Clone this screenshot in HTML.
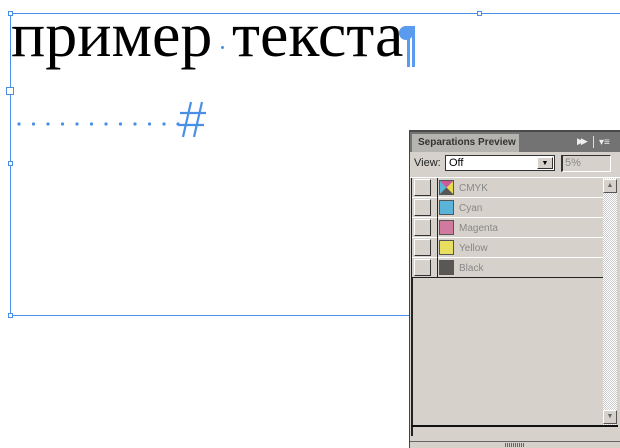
<!DOCTYPE html>
<html><head><style>
body{margin:0;width:620px;height:448px;background:#fff;position:relative;overflow:hidden;font-family:"Liberation Sans",sans-serif}
.a{position:absolute}
.h{position:absolute;width:5px;height:5px;border:1px solid #4a8fe7;background:#fff;box-sizing:border-box}
.row{position:absolute;left:412px;width:191px;height:19px;background:#d6d2cb;border-bottom:1px solid #fff}
.cb{position:absolute;left:2px;top:1px;width:17px;height:17px;border:1px solid #fff;border-right-color:#333;border-bottom-color:#333;box-sizing:border-box}
.sw{position:absolute;left:27px;top:2px;width:15px;height:15px;border:1px solid #555;box-sizing:border-box}
.lb{position:absolute;left:47px;top:5px;font-size:10px;color:#888}
.t{position:absolute;top:3px;font-family:'Liberation Serif',serif;font-size:64px;line-height:64px;color:#000;white-space:nowrap}
</style></head><body>
<div class="a" style="left:10px;top:13px;width:610px;height:1px;background:#4a8fe7"></div>
<div class="a" style="left:10px;top:13px;width:1px;height:302px;background:#4a8fe7"></div>
<div class="a" style="left:10px;top:315px;width:400px;height:1px;background:#4a8fe7"></div>
<div class="h" style="left:8px;top:11px"></div>
<div class="h" style="left:477px;top:11px"></div>
<div class="h" style="left:6px;top:87px;width:8px;height:8px"></div>
<div class="h" style="left:8px;top:161px"></div>
<div class="h" style="left:8px;top:313px"></div>
<div class="t" style="left:11px">пример</div>
<div class="t" style="left:232px">текста</div>
<div class="a" style="left:221px;top:46px;width:3px;height:3px;border-radius:50%;background:#4a8fe7"></div>
<svg class="a" style="left:398px;top:24px" width="22" height="44"><circle cx="8" cy="9" r="7" fill="#5a9bf0"/><rect x="9" y="2" width="3" height="41" fill="#5a9bf0"/><rect x="14" y="2" width="3" height="41" fill="#5a9bf0"/><rect x="8" y="2" width="9" height="3" fill="#5a9bf0"/></svg>
<svg class="a" style="left:14px;top:100px" width="200" height="40">
<g fill="#4a8fe7"><circle cx="5" cy="24" r="1.6"/><circle cx="19.5" cy="24" r="1.6"/><circle cx="34" cy="24" r="1.6"/><circle cx="48.5" cy="24" r="1.6"/><circle cx="63" cy="24" r="1.6"/><circle cx="77.5" cy="24" r="1.6"/><circle cx="92" cy="24" r="1.6"/><circle cx="106.5" cy="24" r="1.6"/><circle cx="121" cy="24" r="1.6"/><circle cx="135.5" cy="24" r="1.6"/><circle cx="150" cy="24" r="1.6"/><circle cx="164" cy="24" r="1.6"/></g>
<g stroke="#4a8fe7" stroke-width="2.2"><line x1="177" y1="2" x2="169" y2="37"/><line x1="188" y1="2" x2="180" y2="37"/><line x1="166" y1="13" x2="192" y2="13"/><line x1="164" y1="25" x2="190" y2="25"/></g></svg>
<!-- panel -->
<div class="a" style="left:409px;top:130px;width:211px;height:318px;background:#d6d2cb;border-left:1px solid #444;border-top:2px solid #4a4a4a;box-sizing:border-box"></div>
<div class="a" style="left:410px;top:132px;width:210px;height:20px;background:#737373"></div>
<div class="a" style="left:412px;top:134px;width:107px;height:18px;background:#b6b4b1;font-size:10px;font-weight:bold;color:#333;line-height:18px;text-indent:6px">Separations Preview</div>
<div class="a" style="left:577px;top:136px;font-size:9px;color:#eee;letter-spacing:-3px">▶▶</div>
<div class="a" style="left:593px;top:136px;width:1px;height:12px;background:#ddd"></div>
<div class="a" style="left:599px;top:138px;font-size:10px;color:#eee;line-height:10px">▾≡</div>
<div class="a" style="left:414px;top:157px;font-size:11px;color:#222">View:</div>
<div class="a" style="left:445px;top:155px;width:110px;height:16px;background:#fff;border:1px solid #333;box-sizing:border-box;font-size:11px;line-height:14px;text-indent:3px">Off</div>
<div class="a" style="left:537px;top:157px;width:16px;height:12px;background:#d6d2cb;border:1px solid #fff;border-right-color:#333;border-bottom-color:#333;box-sizing:border-box;font-size:7px;text-align:center;line-height:11px">▼</div>
<div class="a" style="left:561px;top:155px;width:50px;height:17px;border:1px solid #fff;border-top-color:#333;border-left:2px solid #333;box-sizing:border-box;font-size:11px;color:#888;line-height:14px;text-indent:2px">5%</div>
<div class="a" style="left:410px;top:177px;width:210px;height:1px;background:#fff"></div>
<div class="a" style="left:411px;top:178px;width:2px;height:258px;background:#222"></div>
<div class="row" style="top:178px"><div class="cb"></div><div class="sw" style="background:linear-gradient(135deg,#5ab4d8 50%,#e8d84a 50%)"><svg width="13" height="13" style="position:absolute"><polygon points="0,0 13,0 6.5,6.5" fill="#d0589a"/><polygon points="0,13 13,13 6.5,6.5" fill="#555"/></svg></div><div class="lb">CMYK</div></div>
<div class="row" style="top:198px"><div class="cb"></div><div class="sw" style="background:#5ab4d8"></div><div class="lb">Cyan</div></div>
<div class="row" style="top:218px"><div class="cb"></div><div class="sw" style="background:#d07aa0"></div><div class="lb">Magenta</div></div>
<div class="row" style="top:238px"><div class="cb"></div><div class="sw" style="background:#e8de60"></div><div class="lb">Yellow</div></div>
<div class="row" style="top:258px;border-bottom:1px solid #222"><div class="cb"></div><div class="sw" style="background:#5a5855"></div><div class="lb">Black</div></div>
<div class="a" style="left:437px;top:178px;width:1px;height:100px;background:#222"></div>
<div class="a" style="left:603px;top:178px;width:14px;height:247px;background:repeating-conic-gradient(#ccc 0 25%,#fff 0 50%) 0 0/2px 2px"></div>
<div class="a" style="left:603px;top:179px;width:14px;height:14px;background:#d6d2cb;border:1px solid #fff;border-right-color:#555;border-bottom-color:#555;box-sizing:border-box;font-size:7px;color:#666;text-align:center;line-height:12px">▲</div>
<div class="a" style="left:603px;top:410px;width:14px;height:14px;background:#d6d2cb;border:1px solid #fff;border-right-color:#555;border-bottom-color:#555;box-sizing:border-box;font-size:7px;color:#666;text-align:center;line-height:12px">▼</div>
<div class="a" style="left:411px;top:425px;width:207px;height:2px;background:#111"></div>
<div class="a" style="left:410px;top:441px;width:210px;height:1px;background:#666"></div>
<div class="a" style="left:505px;top:443px;width:20px;height:4px;background:repeating-linear-gradient(90deg,#666 0 1px,transparent 1px 2px)"></div>
</body></html>
